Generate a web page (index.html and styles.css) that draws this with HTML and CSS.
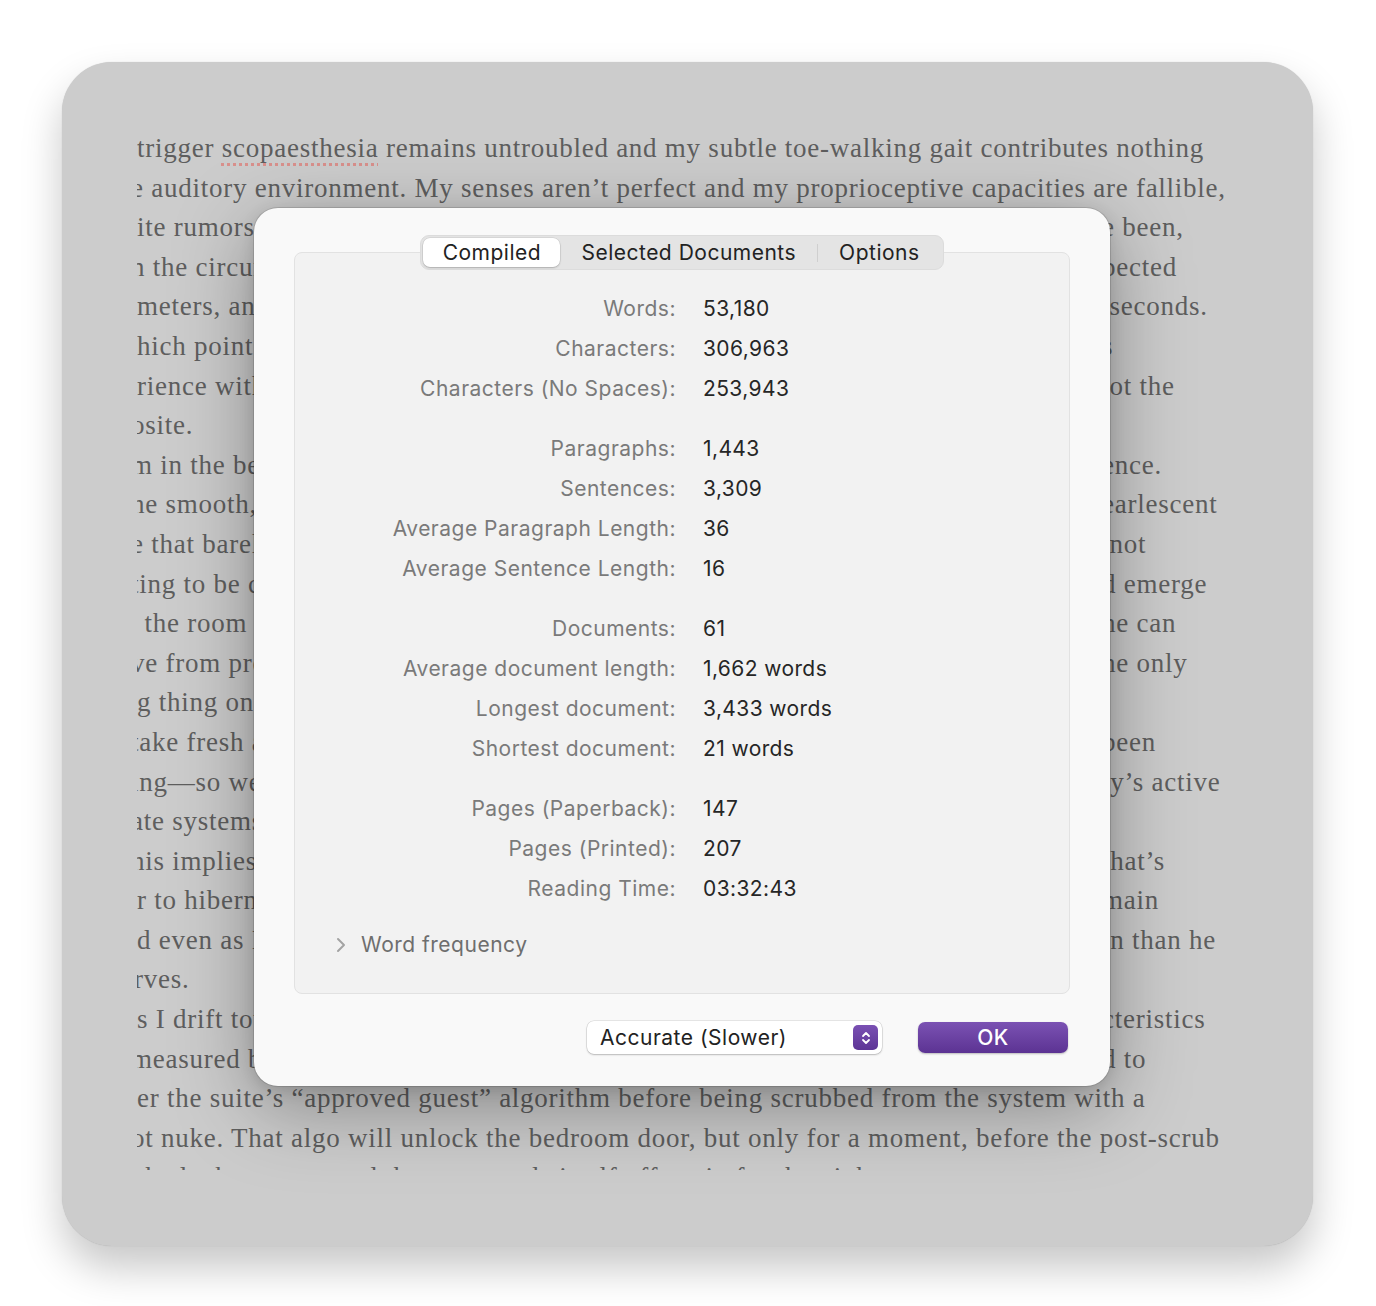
FILE: index.html
```html
<!DOCTYPE html>
<html lang="en">

<head>
    <meta charset="UTF-8">
    <title>Project Statistics</title>
    <link rel="stylesheet" href="styles.css">
</head>

<body>
    <div class="window">
        <div class="manuscript">
            <div class="line">trigger <span class="misspelt">scopaesthesia</span> remains untroubled and my subtle toe-walking gait contributes nothing</div>
            <div class="line cut">e auditory environment. My senses aren’t perfect and my proprioceptive capacities are fallible,</div>
            <div class="line split"><span class="l">ite rumors about the house</span><span class="r">e been,</span></div>
            <div class="line split cut"><span class="l">n the circumstances</span><span class="r">pected</span></div>
            <div class="line split"><span class="l">meters, and then</span><span class="r">&nbsp;seconds.</span></div>
            <div class="line split"><span class="l">hich point the</span><span class="r">s</span></div>
            <div class="line split"><span class="l">rience with the</span><span class="r">&nbsp;ot the</span></div>
            <div class="line split cut"><span class="l">osite.</span><span class="r"></span></div>
            <div class="line split cut"><span class="l">m in the bedroom</span><span class="r">ence.</span></div>
            <div class="line split cut"><span class="l">he smooth, cool</span><span class="r">earlescent</span></div>
            <div class="line split cut"><span class="l">e that barely</span><span class="r">&nbsp;not</span></div>
            <div class="line split cut"><span class="l">ting to be calm</span><span class="r">d emerge</span></div>
            <div class="line split"><span class="l">&nbsp;the room at</span><span class="r">he can</span></div>
            <div class="line split cut"><span class="l">ve from pressure</span><span class="r">he only</span></div>
            <div class="line split"><span class="l">g thing on the</span><span class="r"></span></div>
            <div class="line split cut"><span class="l">take fresh air</span><span class="r">been</span></div>
            <div class="line split cut"><span class="l">ing—so well</span><span class="r">ly’s active</span></div>
            <div class="line split cut"><span class="l">ate systems</span><span class="r"></span></div>
            <div class="line split cut"><span class="l">his implies</span><span class="r">that’s</span></div>
            <div class="line split"><span class="l">r to hibernate</span><span class="r">main</span></div>
            <div class="line split"><span class="l">d even as I</span><span class="r">in than he</span></div>
            <div class="line split soft"><span class="l">rves.</span><span class="r"></span></div>
            <div class="line split"><span class="l">s I drift toward</span><span class="r">cteristics</span></div>
            <div class="line split cut"><span class="l">measured by</span><span class="r">d to</span></div>
            <div class="line">er the suite’s “approved guest” algorithm before being scrubbed from the system with a</div>
            <div class="line cut">ot nuke. That algo will unlock the bedroom door, but only for a moment, before the post-scrub</div>
            <div class="line">the lock engages and the room seals itself off again for the night.</div>
        </div>

        <div class="dialog">
            <div class="panel">
                <div class="segmented">
                    <span class="segment selected">Compiled</span>
                    <span class="segment">Selected Documents</span>
                    <span class="divider"></span>
                    <span class="segment">Options</span>
                </div>

                <div class="stats">
                    <div class="group">
                        <span class="label">Words:</span><span class="value">53,180</span>
                        <span class="label">Characters:</span><span class="value">306,963</span>
                        <span class="label">Characters (No Spaces):</span><span class="value">253,943</span>
                    </div>
                    <div class="group">
                        <span class="label">Paragraphs:</span><span class="value">1,443</span>
                        <span class="label">Sentences:</span><span class="value">3,309</span>
                        <span class="label">Average Paragraph Length:</span><span class="value">36</span>
                        <span class="label">Average Sentence Length:</span><span class="value">16</span>
                    </div>
                    <div class="group">
                        <span class="label">Documents:</span><span class="value">61</span>
                        <span class="label">Average document length:</span><span class="value">1,662 words</span>
                        <span class="label">Longest document:</span><span class="value">3,433 words</span>
                        <span class="label">Shortest document:</span><span class="value">21 words</span>
                    </div>
                    <div class="group">
                        <span class="label">Pages (Paperback):</span><span class="value">147</span>
                        <span class="label">Pages (Printed):</span><span class="value">207</span>
                        <span class="label">Reading Time:</span><span class="value">03:32:43</span>
                    </div>
                </div>

                <div class="disclosure">
                    <svg class="chevron" width="10" height="16" viewBox="0 0 10 16">
                        <path d="M2 2 L8 8 L2 14" fill="none" stroke="#a3a3a3" stroke-width="2" stroke-linecap="round" stroke-linejoin="round"/>
                    </svg>
                    <span>Word frequency</span>
                </div>
            </div>

            <div class="footer">
                <div class="popup">
                    <span>Accurate (Slower)</span>
                    <span class="stepper">
                        <svg width="12" height="18" viewBox="0 0 12 18">
                            <path d="M3 7 L6 4 L9 7 M3 11 L6 14 L9 11" fill="none" stroke="#fff" stroke-width="1.8" stroke-linecap="round" stroke-linejoin="round"/>
                        </svg>
                    </span>
                </div>
                <button class="ok">OK</button>
            </div>
        </div>
    </div>
</body>

</html>
```

FILE: styles.css
```css
body {
    margin: 0;
    background: #ffffff;
    padding: 62px 63px 60px 62px;
}

.window {
    position: relative;
    height: 1184px;
    background: #cccccc;
    border-radius: 50px;
    box-shadow: 0 22px 40px rgba(0, 0, 0, 0.22), 0 0 1px rgba(0, 0, 0, 0.2);
    padding: 67px 0 0 75px;
    box-sizing: border-box;
}

/* background text, clipped like the editor view */
.manuscript {
    width: 1100px;
    height: 1041px;
    overflow: hidden;
    font-family: "Liberation Serif", serif;
    font-size: 27px;
    letter-spacing: 0.75px;
    line-height: 39.6px;
    color: #5e5e5e;
    white-space: nowrap;
}

.line {
    height: 39.6px;
}

.line.cut {
    margin-left: -6px;
}

.line.soft {
    margin-left: -3px;
}

.split {
    display: flex;
}

.split .l {
    flex: 0 0 965px;
    overflow: hidden;
}

.line.cut .l {
    flex-basis: 971px;
}

.line.soft .l {
    flex-basis: 968px;
}

.misspelt {
    text-decoration: underline dotted #d9908c;
    text-decoration-thickness: 3px;
    text-underline-offset: 6px;
}

/* dialog sheet */
.dialog {
    position: absolute;
    left: 192px;
    top: 146px;
    width: 856px;
    height: 878px;
    box-sizing: border-box;
    padding: 44px 40px 0 40px;
    background: #f9f9f9;
    border-radius: 24px;
    box-shadow: 0 0 0 1px rgba(0, 0, 0, 0.12), 0 20px 80px rgba(0, 0, 0, 0.34), 0 4px 16px rgba(0, 0, 0, 0.12);
    font-family: Inter, "Noto Sans", sans-serif;
    font-size: 21px;
    letter-spacing: 0.5px;
    color: #262626;
}

.panel {
    position: relative;
    height: 742px;
    box-sizing: border-box;
    background: #f2f2f2;
    border: 1px solid #e2e2e2;
    border-radius: 8px;
    padding-top: 36px;
}

.segmented {
    position: absolute;
    top: -18px;
    left: 0;
    right: 0;
    margin: 0 auto;
    width: fit-content;
    height: 35px;
    box-sizing: border-box;
    padding: 2px;
    display: flex;
    align-items: center;
    background: #e4e4e4;
    border: 1px solid #dcdcdc;
    border-radius: 9px;
}

.segment {
    height: 100%;
    display: flex;
    align-items: center;
    justify-content: center;
    padding: 0 21px;
    color: #222;
}

.segment.selected {
    width: 137px;
    padding: 0;
    background: #ffffff;
    border-radius: 7px;
    box-shadow: 0 1px 2px rgba(0, 0, 0, 0.2), 0 0 0 0.5px rgba(0, 0, 0, 0.1);
}

.divider {
    width: 1px;
    height: 18px;
    background: #cfcfcf;
}

.stats {
    display: flex;
    flex-direction: column;
    gap: 20px;
}

.group {
    display: grid;
    grid-template-columns: 381px 1fr;
    column-gap: 27px;
    row-gap: 0;
}

.label {
    text-align: right;
    color: #7a7a7a;
    line-height: 40px;
}

.value {
    line-height: 40px;
    letter-spacing: 0.4px;
    color: #262626;
}

.disclosure {
    display: flex;
    align-items: center;
    gap: 15px;
    margin-top: 16px;
    padding-left: 41px;
    color: #6e6e6e;
    line-height: 40px;
}

.footer {
    display: flex;
    justify-content: flex-end;
    align-items: center;
    gap: 36px;
    padding-top: 27px;
    padding-right: 2px;
}

.popup {
    width: 295px;
    height: 33px;
    box-sizing: border-box;
    display: flex;
    align-items: center;
    justify-content: space-between;
    padding: 0 4px 0 13px;
    background: #ffffff;
    border-radius: 7px;
    box-shadow: 0 0 0 0.5px rgba(0, 0, 0, 0.15), 0 1px 2px rgba(0, 0, 0, 0.2);
    color: #222;
}

.stepper {
    width: 25px;
    height: 25px;
    display: flex;
    align-items: center;
    justify-content: center;
    background: linear-gradient(#7a50b3, #5d3596);
    border-radius: 5px;
}

.ok {
    width: 150px;
    height: 31px;
    border: none;
    border-radius: 7px;
    background: linear-gradient(#7b52b3, #5c3393);
    box-shadow: 0 1px 2px rgba(0, 0, 0, 0.25);
    color: #ffffff;
    font-family: Inter, "Noto Sans", sans-serif;
    font-size: 21px;
    font-weight: 500;
    letter-spacing: 0.4px;
}
```
